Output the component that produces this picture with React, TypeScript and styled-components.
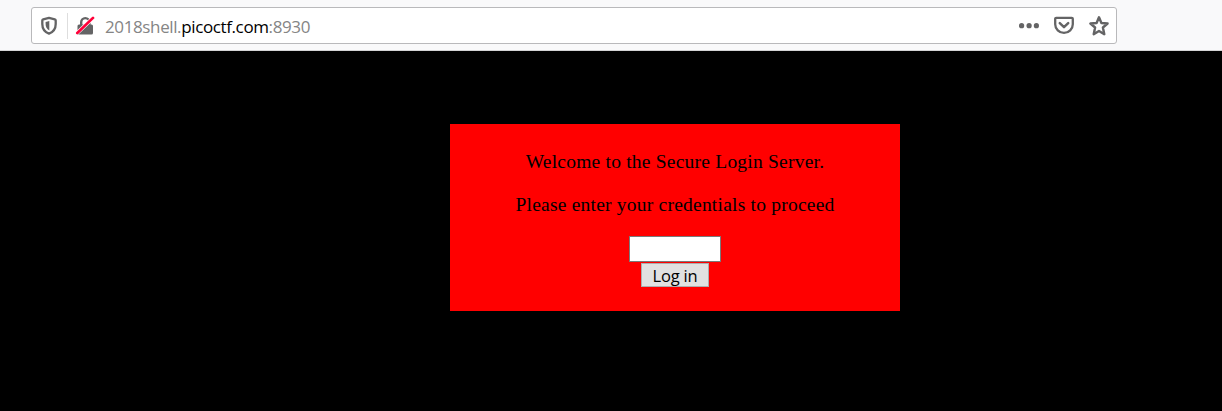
import React from "react";
import styled, { createGlobalStyle } from "styled-components";

const GlobalStyle = createGlobalStyle`
  *, *::before, *::after { box-sizing: border-box; }
  body { margin: 0; background: #000; }
`;

const Browser = styled.div`
  display: flex;
  flex-direction: column;
  height: 100vh;
  overflow: hidden;
`;

const Toolbar = styled.header`
  flex: none;
  height: 51px;
  padding: 7px 105px 0 31px;
  background: #f9f9fa;
  border-bottom: 1px solid #d4d4d5;
`;

const AddressBar = styled.div`
  display: flex;
  align-items: center;
  height: 37px;
  padding: 0 7px 0 8px;
  background: #fff;
  border: 1px solid #b9b9bb;
  border-radius: 3px;
`;

const Icon = styled.svg<{ $gap?: number }>`
  flex: none;
  display: block;
  width: 20px;
  height: 20px;
  margin-left: ${({ $gap }) => $gap ?? 0}px;
  color: #646465;
`;

const Divider = styled.span`
  width: 1px;
  height: 26px;
  margin-left: 7px;
  background: #dedede;
`;

const Url = styled.div`
  flex: 1;
  margin-left: 10px;
  padding-top: 2px;
  font: 17px/24px "Open Sans", "Noto Sans", sans-serif;
  letter-spacing: -0.38px;
  color: #858585;
  white-space: nowrap;
`;

const Domain = styled.span`
  color: #000;
`;

const Page = styled.main`
  flex: 1;
  display: flex;
  align-items: flex-start;
  padding: 73px 0 0 450px;
  background: #000;
`;

const LoginCard = styled.form`
  display: flex;
  flex-direction: column;
  align-items: center;
  width: 450px;
  height: 187px;
  padding-top: 26px;
  background: #f00;
`;

const Message = styled.p`
  margin: 0 0 20px;
  font: 19.5px/23px "Liberation Serif", serif;
  letter-spacing: 0.22px;
  color: #000;
  white-space: nowrap;
`;

const Credential = styled.input`
  width: 92px;
  height: 26px;
  margin: 0 0 1px;
  padding: 0 4px;
  border: 1px solid #7a7a7a;
  border-radius: 0;
  background: #fff;
  outline: none;
`;

const LoginButton = styled.button`
  width: 68px;
  height: 24px;
  padding: 1px 0 0;
  border: 1px solid #adadad;
  border-radius: 0;
  background: #e1e1e1;
  font: 16.5px/22px "Open Sans", "Noto Sans", sans-serif;
  letter-spacing: -0.2px;
  color: #000;
`;

const ShieldIcon = () => (
  <Icon viewBox="0 0 20 20" fill="none">
    <path d="M9 1.900 3.200 3.300Q2.300 3.500 2.300 4.400V8c0 4.500 2.300 8 6.700 9.600 4.400-1.600 6.700-5.100 6.700-9.600V4.400Q15.700 3.500 14.800 3.300z" stroke="currentColor" strokeWidth="2.300" strokeLinejoin="round" />
    <path d="M9.300 5v9.600C6.700 13 5.600 10.800 5.600 8V5.900z" fill="currentColor" />
  </Icon>
);

const InsecureLockIcon = () => (
  <Icon $gap={7} viewBox="0 0 20 20" fill="none">
    <path d="M6.200 10V6.200a4.100 4.100 0 0 1 8.200 0V10" stroke="currentColor" strokeWidth="2.400" />
    <rect x="2.500" y="8.600" width="15.500" height="9.900" rx="1.500" fill="currentColor" />
    <path d="M1.800 17.300 18 1.900" stroke="#fff" strokeWidth="3.900" />
    <path d="M2.300 17 18 1.900" stroke="#ff0039" strokeWidth="2.700" strokeLinecap="round" />
  </Icon>
);

const MoreIcon = () => (
  <Icon viewBox="0 0 20 20" fill="currentColor">
    <circle cx="2.600" cy="9.700" r="2.600" />
    <circle cx="10.100" cy="9.700" r="2.600" />
    <circle cx="17.400" cy="9.700" r="2.600" />
  </Icon>
);

const PocketIcon = () => (
  <Icon $gap={15} viewBox="0 0 20 20" fill="none" stroke="currentColor" strokeWidth="2.300" strokeLinecap="round" strokeLinejoin="round">
    <path d="M2.200 1.800h15.600a1 1 0 0 1 1 1v5.400a8.800 8.700 0 0 1-17.600 0V2.800a1 1 0 0 1 1-1z" />
    <path d="m5.800 7.200 4.200 4 4.200-4" strokeWidth="2.500" />
  </Icon>
);

const StarIcon = () => (
  <Icon $gap={15} viewBox="0 0 20 20" fill="none" stroke="currentColor" strokeWidth="2.400" strokeLinejoin="round">
    <path d="m10 1.300 2.400 5.700 6.200.5-4.700 4 1.400 6.700L10 14.900l-5.300 3.300 1.400-6.700-4.700-4L7.600 7z" />
  </Icon>
);

export default function App() {
  return (
    <Browser>
      <GlobalStyle />
      <Toolbar>
        <AddressBar>
          <ShieldIcon />
          <Divider />
          <InsecureLockIcon />
          <Url>
            2018shell.<Domain>picoctf.com</Domain>:8930
          </Url>
          <MoreIcon />
          <PocketIcon />
          <StarIcon />
        </AddressBar>
      </Toolbar>
      <Page>
        <LoginCard onSubmit={(event) => event.preventDefault()}>
          <Message>Welcome to the Secure Login Server.</Message>
          <Message>Please enter your credentials to proceed</Message>
          <Credential type="password" aria-label="Password" />
          <LoginButton type="submit">Log in</LoginButton>
        </LoginCard>
      </Page>
    </Browser>
  );
}
